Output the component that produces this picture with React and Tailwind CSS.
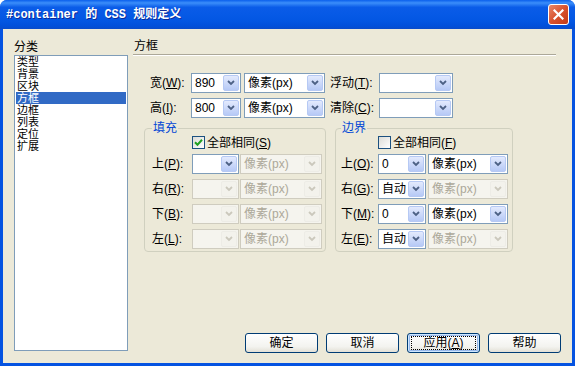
import React from "react";

const F = "font-['Liberation_Sans','Noto_Sans_CJK_SC',sans-serif]";

function Chevron({ dim }) {
  return (
    <svg width="8" height="6" viewBox="0 0 8 6">
      <path d="M1 1 L4 4 L7 1" fill="none" stroke={dim ? "#CBC8BC" : "#4D6185"} strokeWidth="1.8" />
    </svg>
  );
}

function Select({ w, value = "", off = false, arrowOff }) {
  const aOff = arrowOff === undefined ? off : arrowOff;
  return (
    <div
      className={`${w} h-[20px] shrink-0 flex items-stretch p-[1px] border ${
        off ? "border-[#CFCCBF] bg-[#F5F4EE]" : "border-[#7F9DB9] bg-white"
      }`}
    >
      <div
        className={`flex-1 flex items-center pl-[2px] text-[12px] leading-none whitespace-nowrap overflow-hidden ${
          off ? "text-[#ACA899]" : "text-black"
        }`}
      >
        {value}
      </div>
      <div
        className={`w-[16px] rounded-[2px] flex items-center justify-center border ${
          aOff
            ? "border-[#EDECE6] bg-[#F3F2EC]"
            : "border-[#B6C9F4] bg-[linear-gradient(to_bottom,#E3EAFD,#B6C9F6)]"
        }`}
      >
        <Chevron dim={aOff} />
      </div>
    </div>
  );
}

function Label({ w, children }) {
  return (
    <div className={`${w} shrink-0 text-[12px] leading-none whitespace-nowrap text-black`}>{children}</div>
  );
}

function Checkbox({ checked }) {
  return (
    <div className="w-[13px] h-[13px] shrink-0 border border-[#1C5180] bg-[linear-gradient(135deg,#DCDCD7,#FFFFFF)] flex items-center justify-center">
      {checked && (
        <svg width="9" height="9" viewBox="0 0 9 9">
          <path d="M1 4.2 L3.5 6.7 L8 1.8" fill="none" stroke="#21A121" strokeWidth="2" />
        </svg>
      )}
    </div>
  );
}

function Button({ children, def }) {
  return (
    <div
      className={`w-[73px] h-[20px] rounded-[3px] border border-[#003C74] bg-[linear-gradient(to_bottom,#FFFFFF,#F3F3EF_70%,#E3E0D6)] flex items-center justify-center text-[12px] leading-none text-black ${
        def ? "shadow-[inset_0_0_0_1px_#CEE7FF,inset_0_0_0_2px_#98B8EA]" : ""
      }`}
    >
      {def ? (
        <div className="w-[65px] h-[14px] border border-dotted border-black flex items-center justify-center">
          {children}
        </div>
      ) : (
        children
      )}
    </div>
  );
}

const U = ({ c }) => <span className="underline">{c}</span>;

export default function App() {
  const items = ["类型", "背景", "区块", "方框", "边框", "列表", "定位", "扩展"];
  return (
    <div className={`w-[575px] h-[366px] flex flex-col rounded-t-[7px] bg-[#0553E1] overflow-hidden ${F}`}>
      {/* Title bar */}
      <div className="h-[29px] shrink-0 flex items-center justify-between pl-[6px] pr-[6px] bg-[linear-gradient(to_bottom,#0A5FEC_0%,#3B8EFA_10%,#0A5CE8_25%,#0357E3_70%,#0150DA_90%,#0A4CC9_100%)]">
        <div className="text-[12px] font-bold text-white leading-none whitespace-nowrap font-['Liberation_Mono','Noto_Sans_CJK_SC',monospace] [text-shadow:1px_1px_0_#0C2A9A]">
          #container 的 CSS 规则定义
        </div>
        <div className="w-[21px] h-[21px] rounded-[3px] border border-white bg-[linear-gradient(135deg,#E8876A,#D8522E_50%,#C23A17)] flex items-center justify-center">
          <svg width="11" height="11" viewBox="0 0 11 11">
            <path d="M1.5 1.5 L9.5 9.5 M9.5 1.5 L1.5 9.5" stroke="white" strokeWidth="2.2" strokeLinecap="square" />
          </svg>
        </div>
      </div>

      {/* Body */}
      <div className="flex-1 mx-[3px] mb-[3px] bg-[#ECE9D8] flex">
        {/* Left column */}
        <div className="ml-[11px] w-[114px] pt-[12px] flex flex-col">
          <div className="h-[12px] text-[12px] leading-[12px] text-black">分类</div>
          <div className="mt-[2px] h-[296px] border border-[#7F9DB9] bg-white pt-0 px-[1px]">
            {items.map((t, i) => (
              <div
                key={t}
                className={`h-[12px] text-[11px] leading-[12px] pl-[1px] overflow-hidden ${
                  i === 3 ? "bg-[#316AC5] text-white" : "text-black"
                }`}
              >
                {t}
              </div>
            ))}
          </div>
        </div>

        {/* Right column */}
        <div className="ml-[5px] w-[429px] pt-[11px] flex flex-col">
          <div className="h-[12px] text-[12px] leading-[12px] text-black pl-[1px]">方框</div>
          <div className="mt-[2px] mr-[6px] h-[2px] border-t border-[#ACA899] border-b border-b-white" />

          {/* Size rows */}
          <div className="mt-[17px] pl-[17px] flex flex-col gap-[5px]">
            <div className="flex items-center h-[20px]">
              <Label w="w-[41px]">
                宽(<U c="W" />):
              </Label>
              <Select w="w-[50px]" value="890" />
              <div className="w-[3px]" />
              <Select w="w-[81px]" value="像素(px)" />
              <div className="w-[5px]" />
              <Label w="w-[49px]">
                浮动(<U c="T" />):
              </Label>
              <Select w="w-[74px]" />
            </div>
            <div className="flex items-center h-[20px]">
              <Label w="w-[41px]">
                高(<U c="I" />):
              </Label>
              <Select w="w-[50px]" value="800" />
              <div className="w-[3px]" />
              <Select w="w-[81px]" value="像素(px)" />
              <div className="w-[5px]" />
              <Label w="w-[49px]">
                清除(<U c="C" />):
              </Label>
              <Select w="w-[74px]" />
            </div>
          </div>

          {/* Groups */}
          <div className="mt-[3px] ml-[11px] flex">
            <fieldset className="w-[182px] border border-[#D0D0BF] rounded-[4px] pl-[7px] pb-[2px]">
              <legend className="text-[12px] leading-[14px] text-[#0046D5] px-[1px]">填充</legend>
              <div className="mt-[1px] ml-[40px] flex items-center h-[13px] gap-[2px]">
                <Checkbox checked />
                <span className="text-[12px] leading-none text-black">
                  全部相同(<U c="S" />)
                </span>
              </div>
              <div className="mt-[5px] flex flex-col gap-[5px]">
                {[
                  ["上", "P", false],
                  ["右", "R", true],
                  ["下", "B", true],
                  ["左", "L", true],
                ].map(([l, k, off]) => (
                  <div key={l} className="flex items-center h-[20px]">
                    <Label w="w-[40px]">
                      {l}(<U c={k} />):
                    </Label>
                    <Select w="w-[47px]" off={off} />
                    <div className="w-[1px]" />
                    <Select w="w-[82px]" value="像素(px)" off />
                  </div>
                ))}
              </div>
            </fieldset>

            <fieldset className="ml-[9px] w-[178px] border border-[#D0D0BF] rounded-[4px] pl-[5px] pb-[2px]">
              <legend className="text-[12px] leading-[14px] text-[#0046D5] px-[1px]">边界</legend>
              <div className="mt-[1px] ml-[37px] flex items-center h-[13px] gap-[2px]">
                <Checkbox />
                <span className="text-[12px] leading-none text-black">
                  全部相同(<U c="F" />)
                </span>
              </div>
              <div className="mt-[5px] flex flex-col gap-[5px]">
                {[
                  ["上", "O", "0", false],
                  ["右", "G", "自动", true],
                  ["下", "M", "0", false],
                  ["左", "E", "自动", true],
                ].map(([l, k, v, off]) => (
                  <div key={l} className="flex items-center h-[20px]">
                    <Label w="w-[37px]">
                      {l}(<U c={k} />):
                    </Label>
                    <Select w="w-[48px]" value={v} />
                    <div className="w-[2px]" />
                    <Select w="w-[80px]" value="像素(px)" off={off} />
                  </div>
                ))}
              </div>
            </fieldset>
          </div>

          {/* Buttons */}
          <div className="mt-auto mb-[10px] mr-[1px] flex justify-end gap-[8px]">
            <Button>确定</Button>
            <Button>取消</Button>
            <Button def>
              <span>
                应用(<U c="A" />)
              </span>
            </Button>
            <Button>帮助</Button>
          </div>
        </div>
      </div>
    </div>
  );
}
